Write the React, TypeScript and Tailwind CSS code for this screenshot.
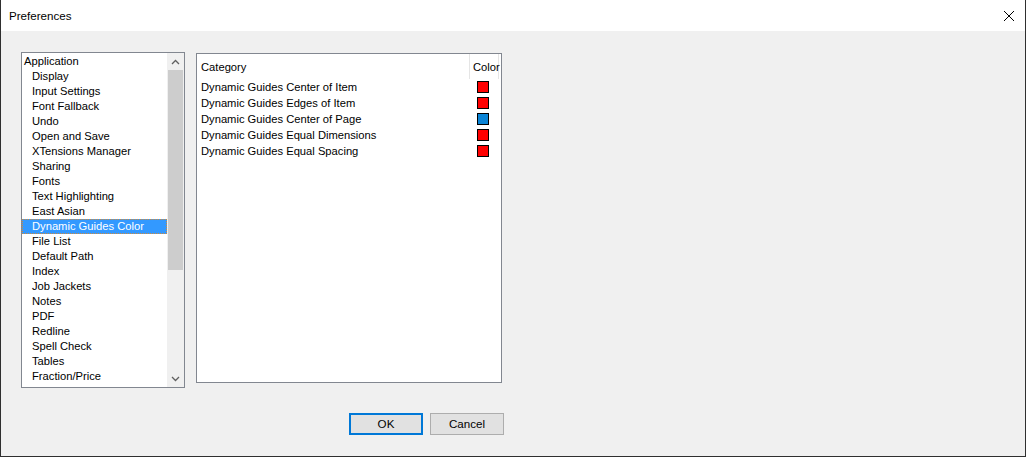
import React from "react";

const items = [
  "Display",
  "Input Settings",
  "Font Fallback",
  "Undo",
  "Open and Save",
  "XTensions Manager",
  "Sharing",
  "Fonts",
  "Text Highlighting",
  "East Asian",
  "Dynamic Guides Color",
  "File List",
  "Default Path",
  "Index",
  "Job Jackets",
  "Notes",
  "PDF",
  "Redline",
  "Spell Check",
  "Tables",
  "Fraction/Price",
];

const guides = [
  { label: "Dynamic Guides Center of Item", color: "bg-[#ff0000]" },
  { label: "Dynamic Guides Edges of Item", color: "bg-[#ff0000]" },
  { label: "Dynamic Guides Center of Page", color: "bg-[#0a84d6]" },
  { label: "Dynamic Guides Equal Dimensions", color: "bg-[#ff0000]" },
  { label: "Dynamic Guides Equal Spacing", color: "bg-[#ff0000]" },
];

function Chevron({ up }: { up?: boolean }) {
  return (
    <svg width="9" height="6" viewBox="0 0 9 6">
      <polyline
        points={up ? "1,5 4.5,1.5 8,5" : "1,1 4.5,4.5 8,1"}
        fill="none"
        stroke="#606060"
        strokeWidth="1.3"
      />
    </svg>
  );
}

export default function App() {
  return (
    <div
      className="w-[1026px] h-[457px] flex flex-col bg-[#f0f0f0] border-x border-b border-[#2f2f2f] text-[11.2px] text-black overflow-hidden"
      style={{ fontFamily: '"Liberation Sans", Arial, sans-serif' }}
    >
      {/* title bar */}
      <div className="h-[31px] bg-white flex items-center justify-between pl-[8px] pr-[10px] shrink-0">
        <span className="text-[11.6px]">Preferences</span>
        <svg width="12" height="12" viewBox="0 0 12 12">
          <path d="M1 1 L11 11 M11 1 L1 11" stroke="#000" strokeWidth="1" />
        </svg>
      </div>

      <div className="flex pt-[21px] pl-[20px] gap-[11px]">
        {/* category list */}
        <div className="w-[164px] h-[336px] bg-white border border-[#828790] flex">
          <div className="flex-1 flex flex-col pt-[1px]">
            <div className="h-[15px] leading-[15px] pl-[2px]">Application</div>
            {items.map((it) => (
              <div
                key={it}
                className={
                  it === "Dynamic Guides Color"
                    ? "h-[15px] leading-[13px] pl-[9px] bg-[#3399ff] text-white border border-dotted border-[#d08a3a]"
                    : "h-[15px] leading-[15px] pl-[10px]"
                }
              >
                {it}
              </div>
            ))}
          </div>
          <div className="w-[17px] flex flex-col bg-[#f0f0f0]">
            <div className="h-[17px] flex items-center justify-center">
              <Chevron up />
            </div>
            <div className="h-[200px] bg-[#cdcdcd] mx-[1px]" />
            <div className="flex-1" />
            <div className="h-[17px] flex items-center justify-center">
              <Chevron />
            </div>
          </div>
        </div>

        {/* guide colors */}
        <div className="w-[306px] h-[330px] mt-[1px] bg-white border border-[#828790] flex flex-col">
          <div className="h-[25px] flex shrink-0">
            <div className="w-[273px] pl-[4px] pt-[5px] border-r border-[#e5e5e5]">Category</div>
            <div className="w-[29px] pl-[3px] pt-[5px] border-r border-[#e5e5e5]">Color</div>
          </div>
          {guides.map((g) => (
            <div key={g.label} className="h-[16px] flex items-center">
              <div className="w-[274px] pl-[4px]">{g.label}</div>
              <div className="pl-[6px] flex items-center">
                <span className={`w-[12px] h-[12px] border border-black ${g.color}`} />
              </div>
            </div>
          ))}
        </div>
      </div>

      {/* buttons */}
      <div className="flex pl-[348px] pt-[25px] gap-[7px]">
        <button className="w-[74px] h-[22px] bg-[#e1e1e1] border-2 border-[#0078d7] text-[11.6px]">
          OK
        </button>
        <button className="w-[74px] h-[22px] bg-[#e1e1e1] border border-[#adadad] text-[11.6px]">
          Cancel
        </button>
      </div>
    </div>
  );
}
